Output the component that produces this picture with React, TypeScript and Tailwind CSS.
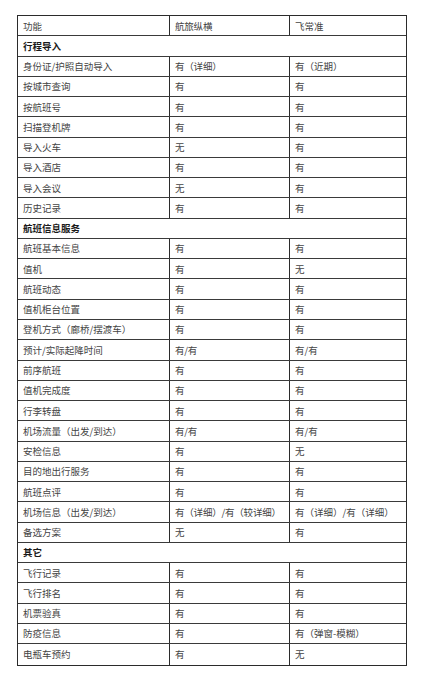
import React from "react";

type Row = { s?: string; c?: [string, string, string] };

const rows: Row[] = [
  { c: ["功能", "航旅纵横", "飞常准"] },
  { s: "行程导入" },
  { c: ["身份证/护照自动导入", "有（详细）", "有（近期）"] },
  { c: ["按城市查询", "有", "有"] },
  { c: ["按航班号", "有", "有"] },
  { c: ["扫描登机牌", "有", "有"] },
  { c: ["导入火车", "无", "有"] },
  { c: ["导入酒店", "有", "有"] },
  { c: ["导入会议", "无", "有"] },
  { c: ["历史记录", "有", "有"] },
  { s: "航班信息服务" },
  { c: ["航班基本信息", "有", "有"] },
  { c: ["值机", "有", "无"] },
  { c: ["航班动态", "有", "有"] },
  { c: ["值机柜台位置", "有", "有"] },
  { c: ["登机方式（廊桥/摆渡车）", "有", "有"] },
  { c: ["预计/实际起降时间", "有/有", "有/有"] },
  { c: ["前序航班", "有", "有"] },
  { c: ["值机完成度", "有", "有"] },
  { c: ["行李转盘", "有", "有"] },
  { c: ["机场流量（出发/到达）", "有/有", "有/有"] },
  { c: ["安检信息", "有", "无"] },
  { c: ["目的地出行服务", "有", "有"] },
  { c: ["航班点评", "有", "有"] },
  { c: ["机场信息（出发/到达）", "有（详细）/有（较详细）", "有（详细）/有（详细）"] },
  { c: ["备选方案", "无", "有"] },
  { s: "其它" },
  { c: ["飞行记录", "有", "有"] },
  { c: ["飞行排名", "有", "有"] },
  { c: ["机票验真", "有", "有"] },
  { c: ["防疫信息", "有", "有（弹窗-模糊）"] },
  { c: ["电瓶车预约", "有", "无"] },
];

export default function App() {
  return (
    <div
      className="w-[425px] h-[679px] bg-white pt-[15px] pl-[17px]"
      style={{ fontFamily: '"Noto Sans CJK SC", "Liberation Sans", sans-serif' }}
    >
      <div className="w-[390px] border border-[#2b2b2b] flex flex-col">
        {rows.map((r, i) => {
          const last = i === rows.length - 1;
          const rb = last ? "" : "border-b border-[#3a3a3a]";
          if (r.s) {
            return (
              <div
                key={i}
                className={`h-[20.28px] flex items-center pl-[5px] text-[9.5px] font-semibold text-[#1a1a1a] ${rb}`}
              >
                {r.s}
              </div>
            );
          }
          const c = r.c!;
          return (
            <div
              key={i}
              className={`h-[20.28px] grid grid-cols-[152px_120px_1fr] text-[9.5px] text-[#444444] ${rb}`}
            >
              <div className="flex items-center pl-[5px] border-r border-[#2b2b2b] whitespace-nowrap">
                {c[0]}
              </div>
              <div className="flex items-center pl-[5px] border-r border-[#2b2b2b] whitespace-nowrap tracking-[-0.2px]">
                {c[1]}
              </div>
              <div className="flex items-center pl-[5px] whitespace-nowrap">
                {c[2]}
              </div>
            </div>
          );
        })}
      </div>
    </div>
  );
}
